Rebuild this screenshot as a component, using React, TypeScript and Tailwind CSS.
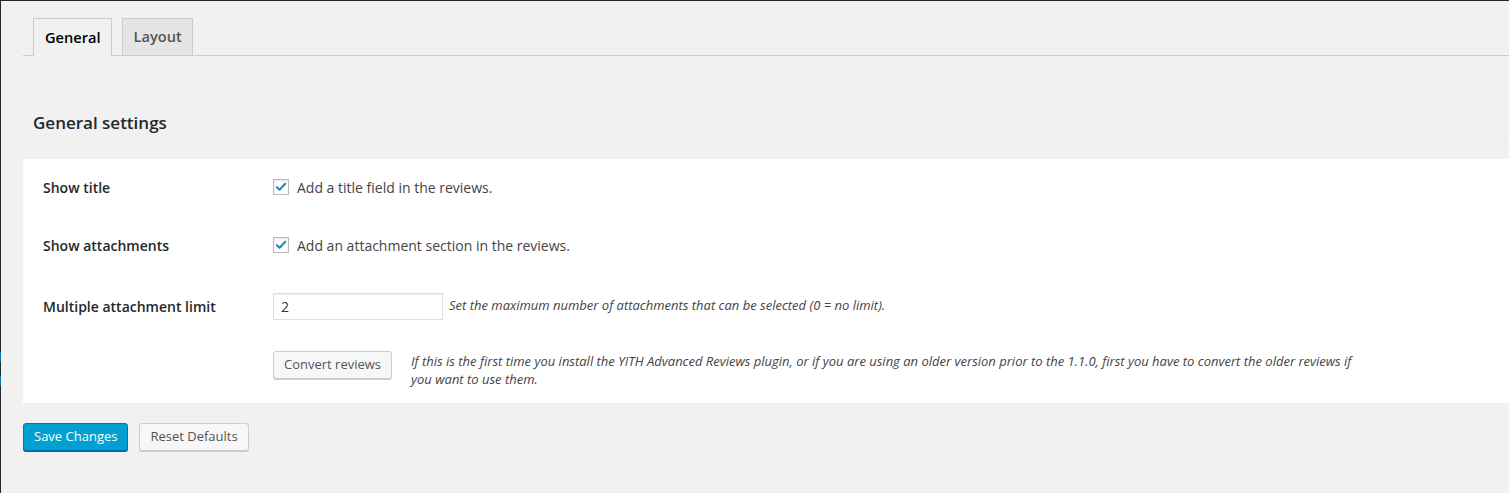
import React from 'react';

const font = { fontFamily: '"Open Sans", "Liberation Sans", sans-serif' };

const CheckBox: React.FC = () => (
  <span className="flex h-4 w-4 items-center justify-center border border-[#b4b9be] bg-white shadow-[inset_0_1px_2px_rgba(0,0,0,0.1)]">
    <svg viewBox="0 0 16 16" className="h-[14px] w-[14px]">
      <path d="M3.2 8.2 L6.4 11.2 L12.8 4.2" fill="none" stroke="#1e8cbe" strokeWidth="2.4" strokeLinecap="round" strokeLinejoin="round" />
    </svg>
  </span>
);

const Row: React.FC<{ label?: string; h?: string; children: React.ReactNode }> = ({ label, h, children }) => (
  <div className={`flex items-center ${h ?? ''}`}>
    <div className="w-[230px] shrink-0 text-[14px] font-semibold text-[#23282d]">{label}</div>
    <div className="flex items-center">{children}</div>
  </div>
);

export default function App() {
  return (
    <div className="flex min-h-[493px] w-full border-t border-[#23282d] bg-[#f1f1f1]" style={font}>
      {/* admin menu edge */}
      <div className="flex w-px shrink-0 flex-col">
        <div className="h-[351px] bg-[#23282d]" />
        <div className="h-[10px] bg-[#0073aa]" />
        <div className="h-[14px] bg-[#23282d]" />
        <div className="h-[10px] bg-[#0073aa]" />
        <div className="flex-1 bg-[#23282d]" />
      </div>

      <div className="flex-1 pl-[22px]">
        {/* tabs */}
        <div className="flex items-end gap-[10px] border-b border-[#ccc] pl-[10px] pt-[17px]">
          <div className="-mb-px flex h-[38px] items-center border border-b-0 border-[#ccc] bg-[#f1f1f1] pl-[11px] pr-[10px] text-[14.6px] font-semibold text-[#000]">
            General
          </div>
          <div className="flex h-[37px] items-center border border-b-0 border-[#ccc] bg-[#e5e5e5] pl-[11px] pr-[10px] text-[14.6px] font-semibold text-[#555]">
            Layout
          </div>
        </div>

        <div className="border-b border-[#ebebeb] pb-[6px] pl-[10px] pt-[55px] text-[17px] font-semibold leading-[24px] text-[#23282d]">
          General settings
        </div>

        {/* settings panel */}
        <div className="mt-[17px] bg-white pl-[20px]">
          <Row label="Show title" h="h-[56px]">
            <CheckBox />
            <span className="ml-2 text-[14px] text-[#444]">Add a title field in the reviews.</span>
          </Row>
          <Row label="Show attachments" h="h-[60px]">
            <CheckBox />
            <span className="ml-2 text-[14px] text-[#444]">Add an attachment section in the reviews.</span>
          </Row>
          <Row label="Multiple attachment limit" h="h-[62px]">
            <div className="flex h-[27px] w-[170px] items-center border border-[#ddd] bg-white px-[7px] text-[14px] text-[#32373c] shadow-[inset_0_1px_2px_rgba(0,0,0,0.07)]">
              2
            </div>
            <span className="ml-[6px] text-[13px] italic text-[#444]">
              Set the maximum number of attachments that can be selected (0 = no limit).
            </span>
          </Row>
          <div className="flex items-start pb-[15px] pt-[14px]">
            <div className="w-[230px] shrink-0" />
            <button className="h-[28px] shrink-0 rounded-[3px] border border-[#ccc] bg-[#f7f7f7] px-[10px] text-[13px] text-[#555] shadow-[0_1px_0_#ccc]">
              Convert reviews
            </button>
            <p className="ml-[19px] mt-[1px] max-w-[945px] text-[13px] italic leading-[18px] text-[#444]">
              If this is the first time you install the YITH Advanced Reviews plugin, or if you are using an older version prior to the 1.1.0, first you have to convert the older reviews if you want to use them.
            </p>
          </div>
        </div>

        {/* footer buttons */}
        <div className="flex gap-[11px] pt-[20px]">
          <button className="h-[28px] rounded-[3px] border border-[#0073aa] bg-[#00a0d2] px-[10px] text-[13px] text-white shadow-[0_1px_0_#006799]">
            Save Changes
          </button>
          <button className="h-[28px] rounded-[3px] border border-[#ccc] bg-[#f7f7f7] px-[10px] text-[13px] text-[#555] shadow-[0_1px_0_#ccc]">
            Reset Defaults
          </button>
        </div>
      </div>
    </div>
  );
}
